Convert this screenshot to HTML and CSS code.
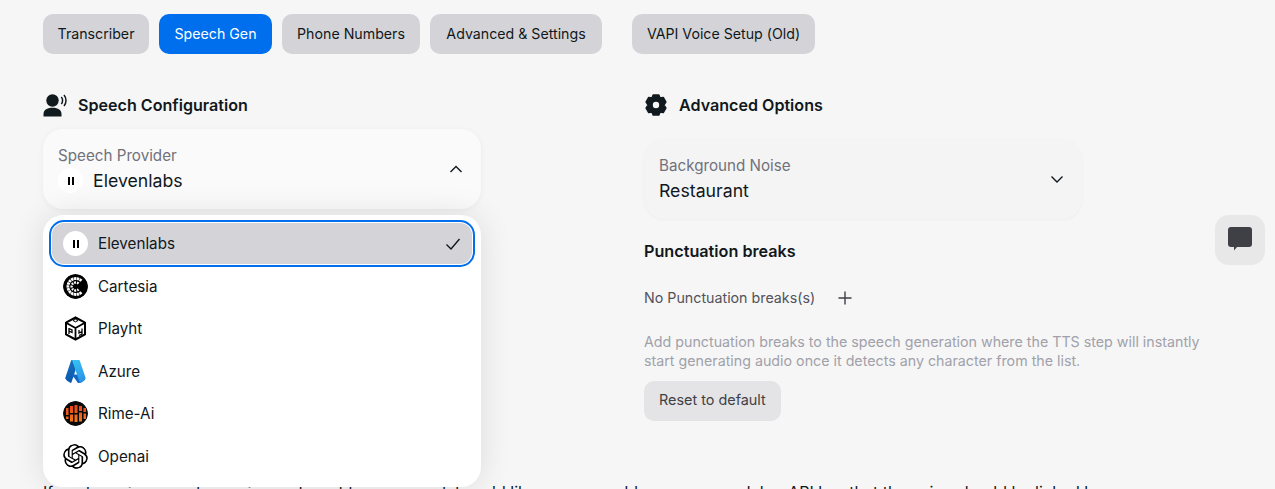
FILE: index.html
```html
<!DOCTYPE html>
<html lang="en">
<head>
    <meta charset="UTF-8">
    <meta name="viewport" content="width=device-width, initial-scale=1.0">
    <title>Speech Gen</title>
    <link rel="stylesheet" href="styles.css">
</head>
<body>
    <main class="page">
        <nav class="tabs">
            <a class="tab tab-transcriber" href="#">Transcriber</a>
            <a class="tab tab-speech tab-active" href="#">Speech Gen</a>
            <a class="tab tab-phone" href="#">Phone Numbers</a>
            <a class="tab tab-advanced" href="#">Advanced &amp; Settings</a>
            <a class="tab tab-old" href="#">VAPI Voice Setup (Old)</a>
        </nav>

        <div class="columns">
            <section class="col col-left">
                <h2 class="col-title">
                    <svg class="title-icon" viewBox="0 0 24 24" fill="#111a1e">
                        <circle cx="9.500" cy="7.500" r="6.200"/>
                        <path d="M.5 23.500v-2.400c0-4 3.200-6.300 9-6.300s9 2.300 9 6.300v2.400z"/>
                        <path d="M18.300 4c.9 1 1.300 2.200 1.300 3.500s-.4 2.500-1.300 3.500M21 2c1.300 1.500 2 3.400 2 5.500s-.7 4-2 5.500" fill="none" stroke="#111a1e" stroke-width="1.500"/>
                    </svg>
                    Speech Configuration
                </h2>
                <div class="select select-open">
                    <div class="select-text">
                        <span class="select-label">Speech Provider</span>
                        <span class="select-value">
                            <span class="logo logo-eleven"><i></i><i></i></span>
                            Elevenlabs
                        </span>
                    </div>
                    <svg class="chevron" viewBox="0 0 16 16"><path d="M2.500 11l5.500-5.500 5.500 5.500"/></svg>
                </div>

                <ul class="menu">
                    <li class="menu-item menu-item-active">
                        <span class="logo logo-eleven"><i></i><i></i></span>
                        Elevenlabs
                        <svg class="check" viewBox="0 0 16 16"><path d="M1.500 8.500l4.500 4.500 8.500-10"/></svg>
                    </li>
                    <li class="menu-item">
                        <svg class="logo" viewBox="0 0 25 25">
                            <circle cx="12.500" cy="12.500" r="12.500" fill="#000"/>
                            <g fill="none" stroke="#fff">
                                <path d="M18.500 6.800A8 8 0 1 0 18.500 18.200" stroke-width="2.800" stroke-dasharray="2.400 .5"/>
                                <path d="M15.500 9.700A4 4 0 1 0 15.500 15.300" stroke-width="2.400" stroke-dasharray="1.800 1"/>
                            </g>
                        </svg>
                        Cartesia
                    </li>
                    <li class="menu-item">
                        <svg class="logo" viewBox="0 0 25 25" fill="none" stroke="#000">
                            <path d="M12.500 1.500l9.500 5.200v11.600l-9.500 5.200-9.500-5.200V6.700z" stroke-width="2"/>
                            <path d="M3 6.700l9.500 5.300 9.500-5.300M12.500 12v11.500" stroke-width="1.800"/>
                            <path d="M10 4.500l2.500-1.300 2.500 1.300-2.500 1.400z" stroke-width="1"/>
                            <path d="M6 12v6M6 12.500l3 1.500v2.500l-3-1.500M19 12.500v3l-3 1.500v-3M19 15.500v2.500l-3 1.500" stroke-width="1.300"/>
                        </svg>
                        Playht
                    </li>
                    <li class="menu-item">
                        <svg class="logo" viewBox="0 0 25 25">
                            <defs>
                                <linearGradient id="azure-a" x1="0" y1="0" x2="0.300" y2="1">
                                    <stop offset="0" stop-color="#1a6fc4"/>
                                    <stop offset="1" stop-color="#0a5aad"/>
                                </linearGradient>
                                <linearGradient id="azure-b" x1="0.300" y1="0" x2="0.700" y2="1">
                                    <stop offset="0" stop-color="#35c1f1"/>
                                    <stop offset="1" stop-color="#2a8ee6"/>
                                </linearGradient>
                            </defs>
                            <path d="M9 1h7L8.500 23.300a1 1 0 0 1-1 .7H2a1 1 0 0 1-1-1.300L8 1.700A1 1 0 0 1 9 1z" fill="url(#azure-a)"/>
                            <path d="M8.500 15.500h9.800l5 7.200a.8.800 0 0 1-.7 1.300H15l-2.500-3.500z" fill="#1167c4"/>
                            <path d="M9 1h6.800a1 1 0 0 1 1 .7l7.100 21a1 1 0 0 1-1 1.300h-7.400a1 1 0 0 0 1-1.300z" fill="url(#azure-b)"/>
                        </svg>
                        Azure
                    </li>
                    <li class="menu-item">
                        <svg class="logo" viewBox="0 0 25 25">
                            <defs>
                                <linearGradient id="rime-bar" x1="0" y1="0" x2="0" y2="1">
                                    <stop offset="0" stop-color="#e8431a"/>
                                    <stop offset="1" stop-color="#f47a1c"/>
                                </linearGradient>
                            </defs>
                            <circle cx="12.500" cy="12.500" r="12.500" fill="#0a0a0a"/>
                            <path fill="url(#rime-bar)" d="M3 7h2.500v7H3zM3 15.500h2.500V18H3zM7 5h3v7H7zM7 13.500h3v7H7zM11.500 4h3v8h-3zM11.500 13.500h3V21h-3zM16 5h3v5h-3zM16 11.500h3v9h-3zM20.500 7H23v4h-2.500zM20.500 12.500H23V18h-2.500z"/>
                        </svg>
                        Rime-Ai
                    </li>
                    <li class="menu-item">
                        <svg class="logo" viewBox="0 0 24 24" fill="#000">
                            <path d="M22.2819 9.8211a5.9847 5.9847 0 0 0-.5157-4.9108 6.0462 6.0462 0 0 0-6.5098-2.9A6.0651 6.0651 0 0 0 4.9807 4.1818a5.9847 5.9847 0 0 0-3.9977 2.9 6.0462 6.0462 0 0 0 .7427 7.0966 5.98 5.98 0 0 0 .511 4.9107 6.051 6.051 0 0 0 6.5146 2.9001A5.9847 5.9847 0 0 0 13.2599 24a6.0557 6.0557 0 0 0 5.7718-4.2058 5.9894 5.9894 0 0 0 3.9977-2.9001 6.0557 6.0557 0 0 0-.7475-7.0729zm-9.022 12.6081a4.4755 4.4755 0 0 1-2.8764-1.0408l.1419-.0804 4.7783-2.7582a.7948.7948 0 0 0 .3927-.6813v-6.7369l2.02 1.1686a.071.071 0 0 1 .038.052v5.5826a4.504 4.504 0 0 1-4.4945 4.4944zm-9.6607-4.1254a4.4708 4.4708 0 0 1-.5346-3.0137l.142.0852 4.783 2.7582a.7712.7712 0 0 0 .7806 0l5.8428-3.3685v2.3324a.0804.0804 0 0 1-.0332.0615L9.74 19.9502a4.4992 4.4992 0 0 1-6.1408-1.6464zM2.3408 7.8956a4.485 4.485 0 0 1 2.3655-1.9728V11.6a.7664.7664 0 0 0 .3879.6765l5.8144 3.3543-2.0201 1.1685a.0757.0757 0 0 1-.071 0l-4.8303-2.7865A4.504 4.504 0 0 1 2.3408 7.872zm16.5963 3.8558L13.1038 8.364 15.1192 7.2a.0757.0757 0 0 1 .071 0l4.8303 2.7913a4.4944 4.4944 0 0 1-.6765 8.1042v-5.6772a.79.79 0 0 0-.407-.667zm2.0107-3.0231l-.142-.0852-4.7735-2.7818a.7759.7759 0 0 0-.7854 0L9.409 9.2297V6.8974a.0662.0662 0 0 1 .0284-.0615l4.8303-2.7866a4.4992 4.4992 0 0 1 6.6802 4.66zM8.3065 12.863l-2.02-1.1638a.0804.0804 0 0 1-.038-.0567V6.0742a4.4992 4.4992 0 0 1 7.3757-3.4537l-.142.0805L8.704 5.459a.7948.7948 0 0 0-.3927.6813zm1.0976-2.3654l2.602-1.4998 2.6069 1.4998v2.9994l-2.5974 1.4997-2.6067-1.4997Z"/>
                        </svg>
                        Openai
                    </li>
                </ul>
            </section>

            <section class="col">
                <h2 class="col-title">
                    <svg class="title-icon title-icon-gear" viewBox="0 0 24 24" fill="#111a1e" stroke="#111a1e" stroke-width="1.600" stroke-linejoin="round">
                        <path fill-rule="evenodd" d="M9.200 2h5.600l1.200 3 3.200-.5 2.600 4.500-2 3 2 3-2.600 4.500-3.200-.5-1.200 3H9.200L8 19l-3.200.5L2.200 15l2-3-2-3 2.600-4.500L8 5zM12 8a4 4 0 1 0 0 8 4 4 0 0 0 0-8z"/>
                    </svg>
                    Advanced Options
                </h2>
                <div class="select select-noise">
                    <div class="select-text">
                        <span class="select-label">Background Noise</span>
                        <span class="select-value">Restaurant</span>
                    </div>
                    <svg class="chevron" viewBox="0 0 16 16"><path d="M2.500 5.500l5.500 5.500 5.500-5.500"/></svg>
                </div>

                <h3 class="sub-title">Punctuation breaks</h3>
                <div class="breaks-row">
                    <span>No Punctuation breaks(s)</span>
                    <svg class="plus" viewBox="0 0 14 14"><path d="M7 .5v13M.5 7h13"/></svg>
                </div>
                <p class="help">Add punctuation breaks to the speech generation where the TTS step will instantly start generating audio once it detects any character from the list.</p>
                <button class="reset-btn" type="button">Reset to default</button>
            </section>
        </div>

        <p class="below">If you're using a custom voice and want to use a model you'd like, you can add your own model or API key that the voice should be linked here.</p>
    </main>

    <button class="chat-btn" type="button" aria-label="Chat">
        <svg viewBox="0 0 26 26" fill="#3f3f46">
            <path d="M4 0h18a3 3 0 0 1 3 3v14a3 3 0 0 1-3 3H10l-3 3.500V20H4a3 3 0 0 1-3-3V3a3 3 0 0 1 3-3z"/>
        </svg>
    </button>
</body>
</html>
```

FILE: styles.css
```css
html, body {
    height: 100%;
    overflow: hidden;
}
body {
    margin: 0;
    background-color: #f6f6f6;
    color: #11181c;
    font-family: Inter, "Liberation Sans", sans-serif;
}
.page {
    padding: 14px 0 0 43px;
}

/* tabs */
.tabs {
    display: flex;
    gap: 10px;
}
.tab {
    display: flex;
    align-items: center;
    justify-content: center;
    height: 38px;
    padding-bottom: 2px;
    border-radius: 10px;
    background-color: #d4d4d8;
    color: #11181c;
    font-size: 14.200px;
    text-decoration: none;
}
.tab-transcriber { width: 106px; }
.tab-speech { width: 113px; }
.tab-phone { width: 138px; }
.tab-advanced { width: 172px; }
.tab-old {
    width: 183px;
    margin-left: 20px;
}
.tab-active {
    background-color: #006fee;
    color: #fff;
}

/* columns */
.columns {
    display: flex;
    gap: 163px;
    margin-top: 39px;
}
.col {
    position: relative;
    width: 438px;
}
.col-title {
    display: flex;
    align-items: center;
    gap: 11px;
    height: 24px;
    margin: 0;
    font-size: 16.100px;
    font-weight: 600;
}
.title-icon {
    width: 24px;
    height: 24px;
}

/* selects */
.select {
    display: flex;
    align-items: center;
    justify-content: space-between;
    box-sizing: border-box;
    height: 80px;
    margin-top: 12px;
    padding: 0 17px 0 15px;
    border-radius: 20px;
    background-color: #fafafa;
    box-shadow: 0 1px 6px rgba(0, 0, 0, 0.05);
}
.select-noise {
    margin-top: 22px;
    background-color: #f4f4f5;
    box-shadow: 0 1px 3px rgba(0, 0, 0, 0.04);
}
.select-text {
    display: flex;
    flex-direction: column;
    gap: 3px;
}
.select-label {
    color: #71717a;
    font-size: 15.200px;
    line-height: 20px;
}
.select-value {
    display: flex;
    align-items: center;
    gap: 10px;
    height: 24px;
    font-size: 17.700px;
}
.chevron {
    width: 16px;
    height: 16px;
    fill: none;
    stroke: #11181c;
    stroke-width: 1.400;
}

/* provider logos */
.logo {
    display: flex;
    flex: none;
    align-items: center;
    justify-content: center;
    gap: 2px;
    width: 25px;
    height: 25px;
    border-radius: 50%;
}
.logo-eleven {
    background-color: #fff;
}
.logo-eleven i {
    width: 2px;
    height: 8px;
    background-color: #000;
}

/* dropdown */
.menu {
    position: absolute;
    top: 122px;
    left: 0;
    box-sizing: border-box;
    width: 438px;
    height: 272px;
    margin: 0;
    padding: 8px 9px;
    border-radius: 20px;
    background-color: #fff;
    box-shadow: 0 0 32px rgba(0, 0, 0, 0.11);
    list-style: none;
}
.menu-item {
    display: flex;
    align-items: center;
    gap: 10px;
    height: 42.500px;
    padding: 0 11px;
    border-radius: 12px;
    font-size: 15.200px;
}
.menu-item-active {
    height: 41px;
    margin-bottom: 1px;
    background-color: #d4d4d8;
    outline: 2px solid #006fee;
    outline-offset: 1px;
}
.check {
    width: 16px;
    height: 16px;
    margin-left: auto;
    fill: none;
    stroke: #11181c;
    stroke-width: 1.400;
}

/* right column */
.sub-title {
    margin: 22px 0 0;
    font-size: 16.200px;
    font-weight: 600;
    line-height: 20px;
}
.breaks-row {
    display: flex;
    align-items: center;
    gap: 23px;
    margin-top: 27px;
    color: #52525b;
    font-size: 14.250px;
    line-height: 20px;
}
.plus {
    width: 14px;
    height: 14px;
    fill: none;
    stroke: #3f3f46;
    stroke-width: 1.400;
}
.help {
    width: 580px;
    margin: 24px 0 0;
    color: #a1a1aa;
    font-size: 14.250px;
    line-height: 19px;
}
.reset-btn {
    display: block;
    height: 40px;
    margin-top: 11px;
    padding: 0 15px 3px;
    border: none;
    border-radius: 10px;
    background-color: #e4e4e7;
    color: #3f3f46;
    font-family: inherit;
    font-size: 14.400px;
}

/* text under the columns */
.below {
    margin: 59px 0 0;
    color: #11181c;
    font-size: 16px;
    line-height: 24px;
    white-space: nowrap;
}

/* floating chat */
.chat-btn {
    position: fixed;
    top: 215px;
    right: 10px;
    display: flex;
    align-items: center;
    justify-content: center;
    width: 50px;
    height: 50px;
    padding: 0;
    border: none;
    border-radius: 14px;
    background-color: #e8e8e8;
}
.chat-btn svg {
    width: 26px;
    height: 26px;
}
```
